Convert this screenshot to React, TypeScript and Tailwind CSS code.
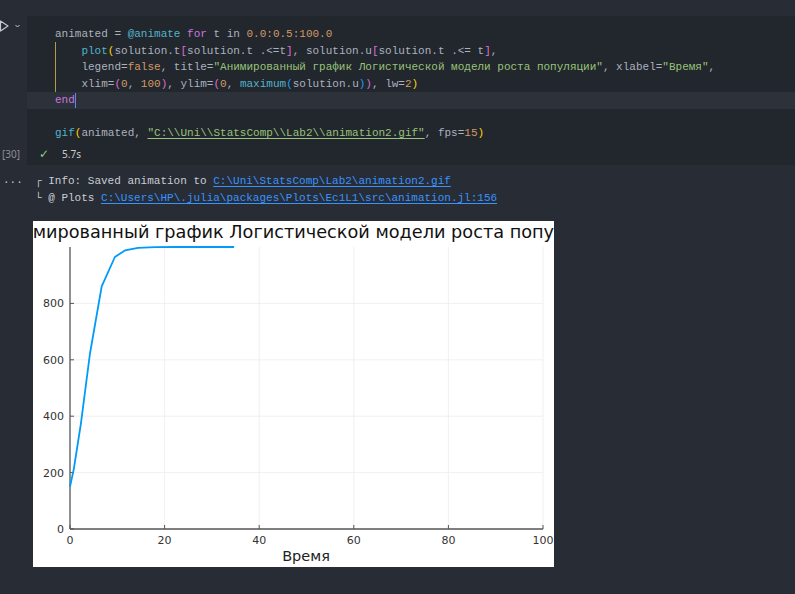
import React from "react";

const K = 1000;
const U0 = 150;
const R = 0.53;
const logistic = (t: number) => K / (1 + (K / U0 - 1) * Math.exp(-R * t));

const X0 = 37;
const X1 = 510;
const YB = 308;
const YT = 26;
const sx = (t: number) => X0 + (t * (X1 - X0)) / 100;
const sy = (u: number) => YB - (u * (YB - YT)) / 1000;

const ts = [0, 0.8, 2.3, 4.2, 6.7, 9.5, 11.6, 14.4, 18, 23, 29, 34.7];
const pts = ts.map((t) => `${sx(t).toFixed(1)},${sy(logistic(t)).toFixed(1)}`).join(" ");

function Plot() {
  const xt = [0, 20, 40, 60, 80, 100];
  const yt = [0, 200, 400, 600, 800];
  return (
    <div className="w-[521px] h-[346px] bg-white overflow-hidden">
      <svg width="521" height="346" viewBox="0 0 521 346" style={{ fontFamily: "'DejaVu Sans', sans-serif" }}>
        {xt.slice(1).map((v) => (
          <line key={"gx" + v} x1={sx(v)} x2={sx(v)} y1={YT} y2={YB} stroke="#ececec" strokeWidth="0.8" />
        ))}
        {yt.slice(1).map((v) => (
          <line key={"gy" + v} x1={X0} x2={X1} y1={sy(v)} y2={sy(v)} stroke="#ececec" strokeWidth="0.8" />
        ))}
        <line x1={X0} x2={X0} y1={YT} y2={YB} stroke="#555" strokeWidth="1.3" />
        <line x1={X0} x2={X1} y1={YB} y2={YB} stroke="#555" strokeWidth="1.3" />
        {xt.map((v) => (
          <line key={"tx" + v} x1={sx(v)} x2={sx(v)} y1={YB} y2={YB - 4} stroke="#555" strokeWidth="1" />
        ))}
        {yt.map((v) => (
          <line key={"ty" + v} x1={X0} x2={X0 + 4} y1={sy(v)} y2={sy(v)} stroke="#555" strokeWidth="1" />
        ))}
        {xt.map((v) => (
          <text key={"lx" + v} x={sx(v)} y={323} fontSize="11" fill="#333" textAnchor="middle">
            {v}
          </text>
        ))}
        {yt.map((v) => (
          <text key={"ly" + v} x={31} y={sy(v) + 4} fontSize="11" fill="#333" textAnchor="end">
            {v}
          </text>
        ))}
        <polyline points={pts} fill="none" stroke="#009af9" strokeWidth="1.8" strokeLinejoin="round" />
        <text x={273} y={340} fontSize="14.5" fill="#222" textAnchor="middle">
          Время
        </text>
        <text x={-35.5} y={17} fontSize="17.7" fill="#111">
          Анимированный график Логистической модели роста популяции
        </text>
      </svg>
    </div>
  );
}

const T = "text-[#52b3c9]";
const P = "text-[#c678dd]";
const O = "text-[#d19a66]";
const G = "text-[#98c379]";
const Y = "text-[#ffd700]";
const V = "text-[#da70d6]";
const B = "text-[#179fff]";

function Line({ children, active }: { children?: React.ReactNode; active?: boolean }) {
  return (
    <div className={"h-[16.5px] leading-[16.5px] whitespace-pre pl-[28px] " + (active ? "bg-[#2c313a]" : "")}>
      {children}
    </div>
  );
}

export default function App() {
  return (
    <div
      className="w-[795px] h-[594px] bg-[#282c34] overflow-hidden text-[#abb2bf] text-[11px]"
      style={{ fontFamily: "'Liberation Mono', 'DejaVu Sans Mono', monospace" }}
    >
      <div className="h-4" />
      {/* code row */}
      <div className="flex">
        <div className="w-[27px] shrink-0 relative">
          <svg className="absolute left-0 top-[4px]" width="24" height="12" viewBox="0 0 24 12">
            <path d="M0.5 1 L8 6 L0.5 11 Z" fill="none" stroke="#c5c8ce" strokeWidth="1.2" strokeLinejoin="round" />
            <path d="M15.5 5 L17.5 7 L19.5 5" fill="none" stroke="#c5c8ce" strokeWidth="1" />
          </svg>
        </div>
        <div className="flex-1 bg-[#22262d] pt-[10px] pb-[2px] relative">
          <div className="absolute left-[28px] top-[26px] w-px h-[50px] bg-[#b39b3e]" />
          <Line>
            animated = <span className={T}>@animate</span> <span className={P}>for</span> t in{" "}
            <span className={O}>0.0:0.5:100.0</span>
          </Line>
          <Line>
            {"    "}
            <span className={T}>plot</span>
            <span className={Y}>(</span>solution.t<span className={V}>[</span>solution.t .&lt;=t
            <span className={V}>]</span>, solution.u<span className={V}>[</span>solution.t .&lt;= t
            <span className={V}>]</span>,
          </Line>
          <Line>
            {"    "}legend=<span className={O}>false</span>, title=
            <span className={G}>"Анимированный график Логистической модели роста популяции"</span>, xlabel=
            <span className={G}>"Время"</span>,
          </Line>
          <Line>
            {"    "}xlim=<span className={V}>(</span>
            <span className={O}>0</span>, <span className={O}>100</span>
            <span className={V}>)</span>, ylim=<span className={V}>(</span>
            <span className={O}>0</span>, <span className={T}>maximum</span>
            <span className={B}>(</span>solution.u<span className={B}>)</span>
            <span className={V}>)</span>, lw=<span className={O}>2</span>
            <span className={Y}>)</span>
          </Line>
          <Line active>
            <span className={P}>end</span>
            <span className="inline-block w-[1.5px] h-[15px] align-middle bg-[#528bff]" />
          </Line>
          <Line />
          <Line>
            <span className={T}>gif</span>
            <span className={Y}>(</span>animated,{" "}
            <span className={G + " underline decoration-[#98c379] underline-offset-2"}>
              "C:\\Uni\\StatsComp\\Lab2\\animation2.gif"
            </span>
            , fps=<span className={O}>15</span>
            <span className={Y}>)</span>
          </Line>
        </div>
      </div>
      {/* status row */}
      <div className="flex h-[21px]">
        <div
          className="w-[27px] shrink-0 flex items-center pl-[2px] text-[10px] text-[#8b9099]"
          style={{ fontFamily: "'Noto Sans', sans-serif" }}
        >
          [30]
        </div>
        <div className="flex-1 bg-[#22262d] flex items-center pl-[12px]">
          <span className="text-[#89d185] text-[12px]" style={{ fontFamily: "'DejaVu Sans', sans-serif" }}>
            ✓
          </span>
          <span className="ml-[13px] text-[10px] text-[#cccccc]" style={{ fontFamily: "'Noto Sans', sans-serif" }}>
            5.7s
          </span>
        </div>
      </div>
      {/* output */}
      <div className="flex pt-[8.5px]">
        <div className="w-[27px] shrink-0 pl-[3px] leading-[14px] text-[#c5c8ce]">...</div>
        <div className="flex-1">
          <div className="pl-[8px] leading-[17px] whitespace-pre text-[#c8ccd4]">
            <div>
              ┌ Info: Saved animation to{" "}
              <span className="text-[#3794ff] underline underline-offset-2">C:\Uni\StatsComp\Lab2\animation2.gif</span>
            </div>
            <div>
              └ @ Plots{" "}
              <span className="text-[#3794ff] underline underline-offset-2">
                C:\Users\HP\.julia\packages\Plots\Ec1L1\src\animation.jl:156
              </span>
            </div>
          </div>
          <div className="pl-[6px] pt-[13.5px]">
            <Plot />
          </div>
        </div>
      </div>
    </div>
  );
}
